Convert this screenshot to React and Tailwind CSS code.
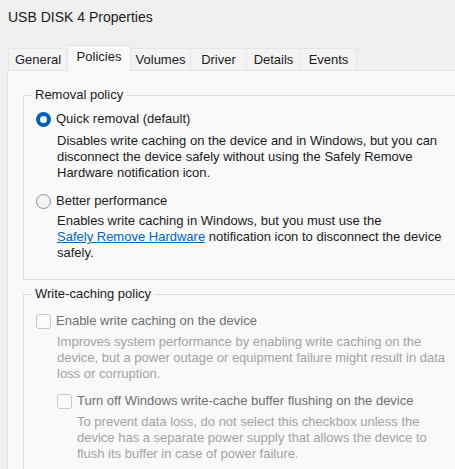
const tabs = [
  { name: "General", w: "w-[60px]" },
  { name: "Policies", w: "w-[64px]" },
  { name: "Volumes", w: "w-[61px]" },
  { name: "Driver", w: "w-[57px]" },
  { name: "Details", w: "w-[55px]" },
  { name: "Events", w: "w-[57px]" },
];

function Radio({ checked }) {
  if (checked) {
    return (
      <span className="flex h-[15px] w-[15px] shrink-0 items-center justify-center rounded-full bg-[#005fb8]">
        <span className="h-[7px] w-[7px] rounded-full bg-white" />
      </span>
    );
  }
  return (
    <span className="h-[15px] w-[15px] shrink-0 rounded-full border border-[#8d8d8d] bg-[#f3f3f3]" />
  );
}

function Checkbox() {
  return (
    <span className="h-[15px] w-[15px] shrink-0 rounded-[3px] border border-[#c8c8c8] bg-[#fbfbfb]" />
  );
}

function Lines({ lines, className }) {
  return (
    <div className={"whitespace-nowrap leading-4 " + className}>
      {lines.map((l, i) => (
        <div key={i}>{l}</div>
      ))}
    </div>
  );
}

export default function App() {
  return (
    <div className="h-[469px] w-[455px] overflow-hidden bg-[#f0f0f0] font-['Liberation_Sans',Arial,sans-serif] text-[13px] text-[#1b1b1b]">
      <div className="h-[45px] pl-[8px] pt-[9px] text-[14px] leading-4">
        USB DISK 4 Properties
      </div>

      <div className="relative z-10 -mb-px flex h-[26px] items-end pl-[8px]">
        {tabs.map((t, i) =>
          t.name === "Policies" ? (
            <div
              key={t.name}
              className={
                "-ml-px flex h-[26px] items-center justify-center border-x border-t border-[#e3e3e3] bg-[#f9f9f9] pb-[4px] " +
                t.w
              }
            >
              {t.name}
            </div>
          ) : (
            <div
              key={t.name}
              className={
                "mb-px flex h-[22px] items-center justify-center border-x border-t border-[#e6e6e6] bg-[#f3f3f3] " +
                t.w +
                (i === 0 ? "" : " -ml-px")
              }
            >
              {t.name}
            </div>
          )
        )}
      </div>

      <div className="ml-[7px] h-[420px] w-[520px] border-l border-t border-[#e3e3e3] bg-[#f9f9f9] pl-[15px] pt-[16px]">
        <fieldset className="w-[480px] border border-[#dedede] pb-[18px] pl-[12px]">
          <legend className="-ml-[4px] px-[3px] leading-4">Removal policy</legend>
          <div className="mt-[8px] flex items-center gap-[5px] leading-4">
            <Radio checked />
            <span>Quick removal (default)</span>
          </div>
          <Lines
            className="ml-[21px] mt-[6px]"
            lines={[
              "Disables write caching on the device and in Windows, but you can",
              "disconnect the device safely without using the Safely Remove",
              "Hardware notification icon.",
            ]}
          />
          <div className="mt-[12px] flex items-center gap-[5px] leading-4">
            <Radio />
            <span>Better performance</span>
          </div>
          <Lines
            className="ml-[21px] mt-[4px]"
            lines={[
              "Enables write caching in Windows, but you must use the",
              <>
                <span className="text-[#0067c0] underline">Safely Remove Hardware</span> notification icon to disconnect the device
              </>,
              "safely.",
            ]}
          />
        </fieldset>

        <fieldset className="mt-[6px] w-[480px] border border-[#dedede] pb-[18px] pl-[12px]">
          <legend className="-ml-[4px] px-[3px] leading-4">Write-caching policy</legend>
          <div className="mt-[11px] flex items-center gap-[5px] leading-4 text-[#6f6f6f]">
            <Checkbox />
            <span>Enable write caching on the device</span>
          </div>
          <Lines
            className="ml-[21px] mt-[5px] text-[#a2a2a2]"
            lines={[
              "Improves system performance by enabling write caching on the",
              "device, but a power outage or equipment failure might result in data",
              "loss or corruption.",
            ]}
          />
          <div className="ml-[21px] mt-[11px] flex items-center gap-[5px] leading-4 text-[#6f6f6f]">
            <Checkbox />
            <span>Turn off Windows write-cache buffer flushing on the device</span>
          </div>
          <Lines
            className="ml-[41px] mt-[5px] text-[#a2a2a2]"
            lines={[
              "To prevent data loss, do not select this checkbox unless the",
              "device has a separate power supply that allows the device to",
              "flush its buffer in case of power failure.",
            ]}
          />
        </fieldset>
      </div>
    </div>
  );
}
